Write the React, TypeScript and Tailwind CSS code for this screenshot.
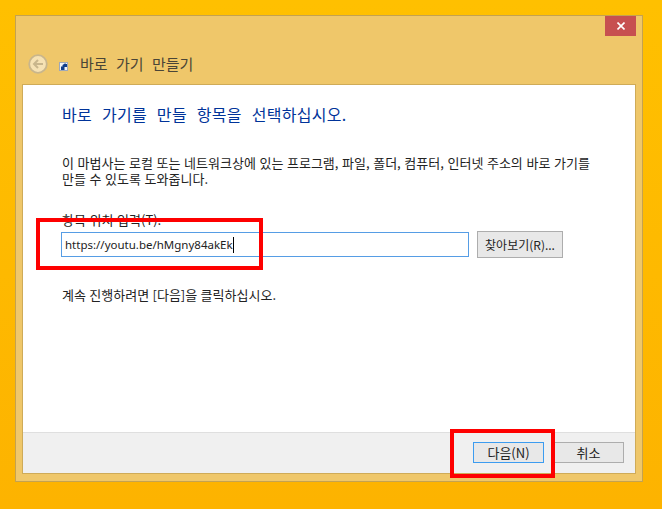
const FONT = "font-['Noto_Sans_CJK_KR','Noto_Sans',sans-serif]";

function BackArrow() {
  return (
    <svg width="20" height="20" viewBox="0 0 20 20" className="shrink-0">
      <circle cx="10" cy="10" r="8.8" fill="#f6e2b4" stroke="#c9b68c" strokeWidth="1.8" />
      <path d="M15 10H6.5M10 6l-4 4 4 4" fill="none" stroke="#c9b68c" strokeWidth="2" />
    </svg>
  );
}

function ShortcutIcon() {
  return (
    <svg width="9" height="9" viewBox="0 0 9 9" className="shrink-0">
      <rect x="0" y="0" width="9" height="9" fill="#f4f4f4" />
      <rect x="0.5" y="0.5" width="8" height="8" fill="none" stroke="#9fa8b8" />
      <path d="M2 8V4.5h1.5V3L6.5 1v1H8v3H5.5v3z" fill="#123f8c" />
    </svg>
  );
}

function Button({ label, focused }: { label: string; focused?: boolean }) {
  return (
    <button
      className={`w-[71px] h-[21px] flex items-center justify-center bg-[#e8e8e8] text-[13px] text-[#222] border ${
        focused ? "border-[#3c9cf0]" : "border-[#adadad]"
      }`}
    >
      {label}
    </button>
  );
}

export default function App() {
  return (
    <div className={`relative w-[662px] h-[509px] overflow-hidden pl-[15px] pt-[15px] bg-gradient-to-b from-[#ffc000] to-[#fdb300] ${FONT}`}>
      {/* window */}
      <div className="w-[628px] h-[467px] flex flex-col border border-[#c4a24f] bg-[#efc76a]">
        <div className="flex justify-end pr-[6px]">
          <div className="w-[31px] h-[20px] bg-[#c75050] flex items-center justify-center">
            <svg width="8" height="8" viewBox="0 0 8 8">
              <path d="M0.5 0.5l7 7M7.5 0.5l-7 7" stroke="#fff" strokeWidth="1.6" />
            </svg>
          </div>
        </div>

        <div className="h-[48px] flex items-start pl-[12px] pt-[18px]">
          <BackArrow />
          <div className="ml-[11px] mt-[8px]">
            <ShortcutIcon />
          </div>
          <span className="ml-[12px] text-[15px] leading-[20px] [word-spacing:5px] text-[#4a4537]">바로 가기 만들기</span>
        </div>

        {/* content */}
        <div className="mx-[6px] h-[390px] flex flex-col border border-[#cfab58] bg-white">
          <div className="flex-1 pl-[38px] pr-[24px] pt-[18px] text-[13px] text-[#222]">
            <h1 className="pl-[1px] text-[16px] leading-[22px] font-normal tracking-[0.3px] [word-spacing:6px] text-[#003399]">
              바로 가기를 만들 항목을 선택하십시오.
            </h1>
            <p className="pl-[1px] mt-[30px] leading-[16px] [word-spacing:0.7px]">
              이 마법사는 로컬 또는 네트워크상에 있는 프로그램, 파일, 폴더, 컴퓨터, 인터넷 주소의 바로 가기를
              <br />
              만들 수 있도록 도와줍니다.
            </p>
            <label className="block pl-[1px] mt-[25px] leading-[16px] [word-spacing:0.7px]">항목 위치 입력(T):</label>
            <div className="mt-[3px] flex items-center gap-[8px]">
              <div className="w-[408px] h-[25px] flex items-center pl-[3px] border border-[#569de5] bg-white">
                <span className="text-[11.5px] border-r border-black leading-[16px] font-['Noto_Sans',sans-serif]">https://youtu.be/hMgny84akEk</span>
              </div>
              <button className="w-[86px] h-[27px] flex items-center justify-center bg-[#e8e8e8] border border-[#adadad] text-[12px] text-[#222]">
                찾아보기(R)...
              </button>
            </div>
            <p className="pl-[1px] mt-[29px] leading-[16px] [word-spacing:0.5px]">계속 진행하려면 [다음]을 클릭하십시오.</p>
          </div>
          <div className="h-[41px] flex items-start pt-[9px] justify-end gap-[9px] pr-[11px] bg-[#f0f0f0] border-t border-[#dfdfdf]">
            <Button label="다음(N)" focused />
            <Button label="취소" />
          </div>
        </div>
      </div>

      {/* red annotations */}
      <div className="absolute left-[36px] top-[218px] w-[227px] h-[52px] border-[4px] border-[#fe0000]" />
      <div className="absolute left-[450px] top-[429px] w-[105px] h-[49px] border-[4px] border-[#fe0000]" />
    </div>
  );
}
